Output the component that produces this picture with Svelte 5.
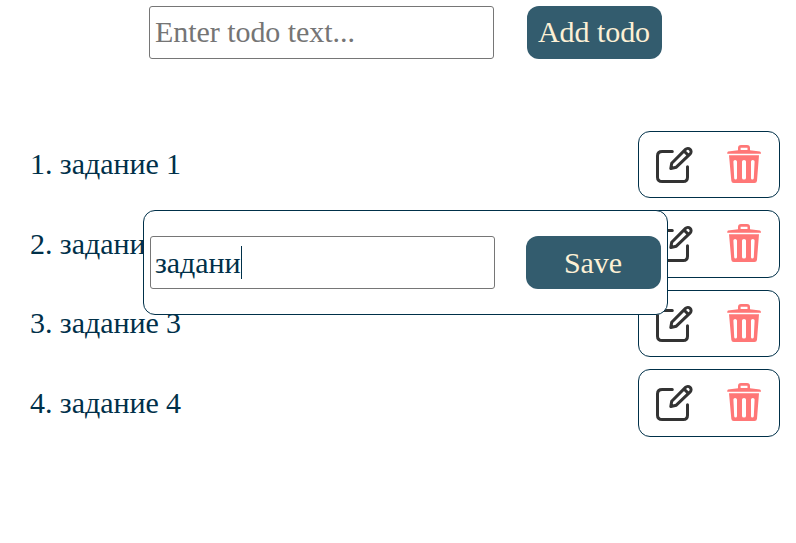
<script>
  let draft = $state('');
  let edited = $state('задани');
  let todos = $state(['задание 1', 'задание 2', 'задание 3', 'задание 4']);

  function add() {
    if (draft.trim()) todos.push(draft.trim());
    draft = '';
  }
  function remove(i) {
    todos.splice(i, 1);
  }
  function save() {
    todos[1] = edited;
  }
</script>

<main>
  <div class="form">
    <input class="field" placeholder="Enter todo text..." bind:value={draft} />
    <button class="primary" onclick={add}>Add todo</button>
  </div>

  <ul>
    {#each todos as todo, i}
      <li>
        <span>{i + 1}. {todo}</span>
        <div class="actions">
          <button class="icon" aria-label="Edit">
            <svg width="50" height="50" viewBox="0 0 50 50" fill="none" stroke="#333" stroke-width="3" stroke-linecap="round" stroke-linejoin="round">
              <path d="M22.3 11.5H12.2Q7.5 11.5 7.5 15.9V37.2Q7.5 41.5 12.2 41.5H33.2Q37.5 41.5 37.5 37.2V26.8" />
              <path d="M20.8 28.5L21.7 23.2L35.5 9.4A3 3 0 0 1 40.2 13.9L26.3 27.2ZM34 11L38.4 15.4" />
            </svg>
          </button>
          <button class="icon" aria-label="Delete" onclick={() => remove(i)}>
            <svg width="50" height="50" viewBox="0 0 50 50" fill="#ff7777">
              <path fill-rule="evenodd" d="M18 10.3V8Q18 5 21 5H27Q30 5 30 8V10.3L40 11.4Q41 11.6 41 13.8H7.2Q7.2 11.6 8 11.4ZM20.6 10H27.5V7.8H20.6Z" />
              <path fill-rule="evenodd" d="M9 15.2H39L37 40.7Q36.8 43 34.5 43H13.7Q11.5 43 11.3 40.7ZM13.4 21.5L14.2 38.2Q14.4 39.5 15.6 39.5T17 38.2V21.5Q16.8 20 15.1 20T13.4 21.5ZM22 21.5V38Q22 39.5 24 39.5T26 38V21.5Q26 20 24 20T22 21.5ZM31 21.5V38.2Q31 39.5 32.3 39.5T33.8 38.2L34.6 21.5Q34.6 20 32.8 20T31 21.5Z" />
            </svg>
          </button>
        </div>
      </li>
    {/each}
  </ul>

  <div class="modal">
    <div class="field editing"><span>{edited}</span><i></i></div>
    <button class="primary save" onclick={save}>Save</button>
  </div>
</main>

<style>
  :global(body) {
    background: #fff;
    overflow: hidden;
  }
  main {
    position: relative;
    height: 543px;
    box-sizing: border-box;
    padding-top: 6px;
    font: 30px/34px "Liberation Serif", "Times New Roman", serif;
    letter-spacing: -0.05px;
    color: #003049;
  }
  .form {
    display: flex;
    gap: 33px;
    padding-left: 149px;
  }
  .field {
    box-sizing: border-box;
    width: 345px;
    height: 53px;
    margin: 0;
    padding: 0 5px 1px;
    border: 1px solid #767676;
    border-radius: 3px;
    background: #fff;
    font: inherit;
    letter-spacing: inherit;
    color: inherit;
    outline: none;
  }
  .field::placeholder {
    color: #757575;
  }
  .primary {
    width: 135px;
    height: 53px;
    padding: 0 1px 1px 0;
    border: 0;
    border-radius: 12px;
    background: #335c6e;
    color: #fdf0d5;
    font: inherit;
    letter-spacing: inherit;
    white-space: nowrap;
  }
  .save {
    padding-bottom: 0;
  }
  ul {
    list-style: none;
    margin: 71.6px 16px 0 30px;
    padding: 0;
    display: flex;
    flex-direction: column;
    gap: 12px;
  }
  li {
    display: flex;
    justify-content: space-between;
    align-items: center;
    height: 67.5px;
  }
  .actions {
    box-sizing: border-box;
    display: flex;
    gap: 20px;
    width: 142px;
    height: 67.5px;
    padding: 8px 9px 0 11px;
    border: 1px solid #003049;
    border-radius: 12px;
    background: #fff;
  }
  .icon {
    display: block;
    width: 50px;
    height: 50px;
    padding: 0;
    border: 0;
    background: none;
  }
  .icon svg {
    display: block;
  }
  .modal {
    position: absolute;
    left: 143px;
    top: 210px;
    box-sizing: border-box;
    width: 525px;
    height: 105px;
    display: flex;
    align-items: center;
    justify-content: space-between;
    padding: 0 6px;
    border: 1px solid #003049;
    border-radius: 12px;
    background: #fff;
  }
  .editing {
    display: flex;
    align-items: center;
    padding: 0 4px;
  }
  .editing i {
    width: 1px;
    height: 33px;
    background: #003049;
  }
</style>
